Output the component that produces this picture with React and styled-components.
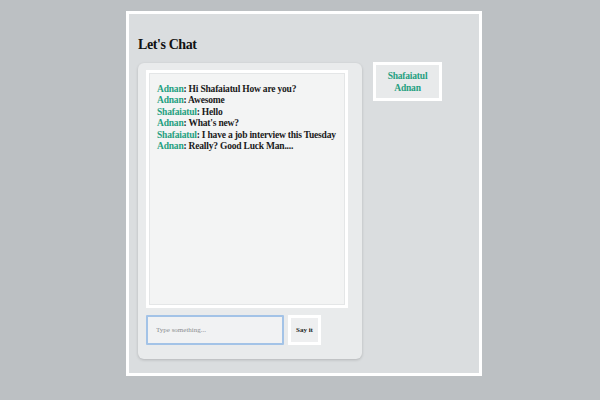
import React, { useState } from 'react';
import styled, { createGlobalStyle } from 'styled-components';

const GlobalStyle = createGlobalStyle`
  html, body {
    margin: 0;
    padding: 0;
    background: #bcc0c3;
    font-family: "Liberation Serif", "DejaVu Serif", serif;
  }
`

const Page = styled.div`
  width: 600px;
  height: 400px;
  padding: 11px 0 0 126px;
  box-sizing: border-box;
`

const Panel = styled.div`
  width: 356px;
  height: 365px;
  box-sizing: border-box;
  border: 3px solid #ffffff;
  background: #dadddf;
  padding: 22px 9px 0 9px;
`

const Title = styled.h2`
  margin: 0 0 9px 0;
  font-size: 14px;
  line-height: 17px;
  font-weight: bold;
  letter-spacing: -0.4px;
  color: #111;
`

const Row = styled.div`
  display: flex;
  align-items: flex-start;
  gap: 11px;
`

const ChatCard = styled.div`
  width: 224px;
  height: 296px;
  box-sizing: border-box;
  background: #e9ebec;
  border-radius: 6px;
  box-shadow: 0 1px 3px rgba(0, 0, 0, 0.18);
  padding: 7px 14px 0 8px;
  margin-top: 1px;
`

const Messages = styled.div`
  height: 238px;
  box-sizing: border-box;
  border: 3px solid #ffffff;
  background: #f3f4f4;
  box-shadow: inset 0 0 0 1px #e4e6e7;
  padding: 11px 8px;
  font-size: 9.5px;
  line-height: 11.4px;
  letter-spacing: -0.2px;
  color: #1a1a1a;
`

const Line = styled.div`
  white-space: nowrap;
  font-weight: bold;
`

const Name = styled.span`
  color: #25a080;
`

const Form = styled.div`
  display: flex;
  gap: 4px;
  margin-top: 7px;
`

const Input = styled.input`
  width: 138px;
  height: 30px;
  box-sizing: border-box;
  border: 2px solid #a3c3e7;
  border-radius: 1px;
  background: #f1f2f3;
  padding: 0 8px;
  font-family: inherit;
  font-size: 7px;
  outline: none;
  &::placeholder {
    color: #8a8d90;
  }
`

const SayButton = styled.button`
  width: 33px;
  height: 30px;
  box-sizing: border-box;
  border: 3px solid #ffffff;
  background: #eeeff0;
  font-family: inherit;
  font-size: 7px;
  font-weight: bold;
  color: #222;
  padding: 0;
`

const Users = styled.div`
  width: 69px;
  height: 39px;
  box-sizing: border-box;
  border: 3px solid #ffffff;
  background: #e8eaeb;
  display: flex;
  align-items: center;
  justify-content: center;
  text-align: center;
  font-size: 9.5px;
  line-height: 12px;
  letter-spacing: -0.2px;
  font-weight: bold;
  color: #25a080;
`

const messages = [
  { name: 'Adnan', text: 'Hi Shafaiatul How are you?' },
  { name: 'Adnan', text: 'Awesome' },
  { name: 'Shafaiatul', text: 'Hello' },
  { name: 'Adnan', text: "What's new?" },
  { name: 'Shafaiatul', text: 'I have a job interview this Tuesday' },
  { name: 'Adnan', text: 'Really? Good Luck Man....' },
]

const App = () => {
  const [draft, setDraft] = useState('');

  return (
    <Page>
      <GlobalStyle />
      <Panel>
        <Title>Let's Chat</Title>
        <Row>
          <ChatCard>
            <Messages>
              {messages.map((m, i) => (
                <Line key={i}>
                  <Name>{m.name}</Name>: {m.text}
                </Line>
              ))}
            </Messages>
            <Form>
              <Input
                placeholder="Type something..."
                value={draft}
                onChange={e => setDraft(e.target.value)}
              />
              <SayButton>Say it</SayButton>
            </Form>
          </ChatCard>
          <Users>Shafaiatul<br />Adnan</Users>
        </Row>
      </Panel>
    </Page>
  )
}

export default App;
